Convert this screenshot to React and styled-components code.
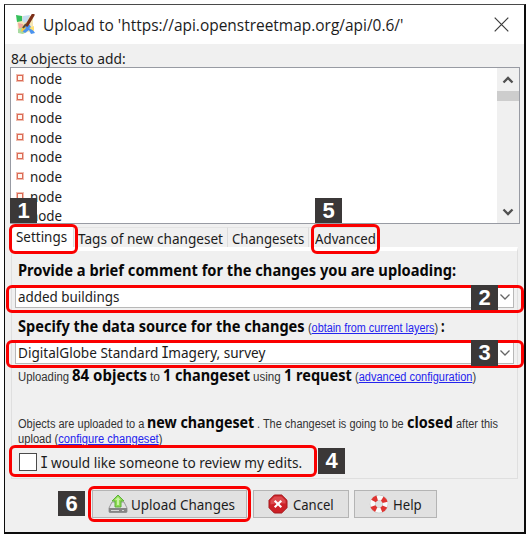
import React, { useLayoutEffect, useRef, useState } from "react";
import styled, { createGlobalStyle } from "styled-components";

const GlobalStyle = createGlobalStyle`
  * { box-sizing: border-box; }
  body { margin: 0; background: #fff; }
`;

const Page = styled.div`
  position: relative;
  width: 532px;
  height: 538px;
  padding: 4px 5px 4px 4px;
  background: #fff;
  color: #1c1c1c;
  font-family: "Noto Sans", "Open Sans", sans-serif;
  font-size: 15px;
  white-space: nowrap;
  overflow: hidden;
`;

const FitBox = styled.span`
  display: inline-block;
  flex: none;
  width: ${(p) => p.$width}px;
  white-space: pre;
`;

const FitText = styled.span`
  display: inline-block;
  transform-origin: left;
`;

/* Condenses a run of text so that it takes exactly the given width. */
function Fit({ width, children, ...rest }) {
  const ref = useRef(null);
  const [scale, setScale] = useState(1);
  useLayoutEffect(() => {
    setScale(width / ref.current.offsetWidth);
  }, [width]);
  return (
    <FitBox $width={width} {...rest}>
      <FitText ref={ref} style={{ transform: `scaleX(${scale})` }}>{children}</FitText>
    </FitBox>
  );
}

const SerifI = styled.span`
  font-family: "DejaVu Sans Mono", monospace;
  line-height: 1;
  margin: 0 -1px;
`;

const Dialog = styled.section`
  width: 522px;
  height: 530px;
  border: 2px solid #0c0c0c;
  border-top: 1px solid #4a4a4a;
  border-left-width: 1px;
  background: #f0f0f0;
  display: flex;
  flex-direction: column;
`;

const TitleBar = styled.header`
  height: 39px;
  flex: none;
  background: #fff;
  display: flex;
  align-items: center;
  padding: 0 15px 0 11px;
`;

const Title = styled.h1`
  margin: 0 auto 0 7px;
  font: 400 17px/37px "Open Sans", "Noto Sans", sans-serif;
`;

const Caption = styled.div`
  height: 23px;
  flex: none;
  padding-left: 6px;
  line-height: 28px;
`;

const ListBox = styled.div`
  width: 510px;
  height: 157px;
  flex: none;
  margin-left: 5px;
  border: 1px solid #989ba3;
  background: #fff;
  display: flex;
  justify-content: space-between;
  overflow: hidden;
`;

const Rows = styled.ul`
  margin: 0;
  padding: 0 0 0 6px;
  list-style: none;
`;

const Row = styled.li`
  height: 19.65px;
  line-height: 20px;
  display: flex;
  align-items: center;
  gap: 7px;
`;

const NodeMark = styled.span`
  width: 6px;
  height: 6px;
  border: 1px solid #dc6b57;
  outline: 0.5px solid #f0beb0;
  background: #fff6ee;
`;

const ScrollBar = styled.div`
  width: 22px;
  background: #f0f0f0;
  display: flex;
  flex-direction: column;
  align-items: center;
`;

const ScrollArrow = styled.span`
  height: 23px;
  display: flex;
  align-items: center;
`;

const Thumb = styled.span`
  width: 22px;
  height: 10px;
  margin-bottom: auto;
  background: #cdcdcd;
`;

const TabStrip = styled.nav`
  height: 23px;
  flex: none;
  margin-left: 6px;
  display: flex;
  align-items: flex-end;
`;

const Tab = styled.div`
  width: ${(p) => p.$width}px;
  height: ${(p) => (p.$active ? 22 : 20)}px;
  padding-left: ${(p) => p.$inset}px;
  line-height: ${(p) => (p.$active ? 20 : 21)}px;
  background: ${(p) => (p.$active ? "#fff" : "#f0f0f0")};
  border-right: 1px solid #dcdcdc;
  border-top: 1px solid #e4e4e4;
`;

const Pane = styled.main`
  width: 507px;
  height: 232px;
  flex: none;
  margin-left: 6px;
  border: 1px solid #dfdfdf;
  border-top: 4px solid #fff;
  padding-left: 3px;
`;

const Heading = styled.h2`
  margin: 0;
  height: ${(p) => p.$height}px;
  padding-left: 3px;
  display: flex;
  align-items: baseline;
  gap: 3px;
  font: 700 16px/${(p) => p.$line}px "Noto Sans", sans-serif;
  color: #080808;
`;

const Combo = styled.div`
  width: 499px;
  height: 23px;
  border: 1px solid #b8b8b8;
  background: #fff;
  display: flex;
  justify-content: space-between;
  align-items: center;
  padding: 0 2px;
  line-height: 21px;
`;

const Info = styled.p`
  margin: 0;
  height: ${(p) => p.$height}px;
  padding-left: 3px;
  display: flex;
  align-items: baseline;
  gap: 3px;
  line-height: ${(p) => p.$line}px;
`;

const Small = styled(Fit)`
  font-family: "Liberation Sans", Arial, sans-serif;
  font-size: 12px;
  font-weight: 400;
  color: #333;
`;

const Strong = styled(Fit)`
  font-size: 16px;
  font-weight: 700;
  color: #080808;
`;

const Link = styled.a`
  color: #2424ee;
  text-decoration: underline;
`;

const CheckRow = styled.label`
  height: 34px;
  padding: 1px 0 0 4px;
  display: flex;
  align-items: center;
  gap: 4px;
  line-height: 20px;
`;

const CheckBox = styled.span`
  width: 18px;
  height: 18px;
  border: 1px solid #4a4a4a;
  background: #fff;
`;

const Actions = styled.footer`
  display: flex;
  gap: 5px;
  padding: 11px 0 0 87px;
`;

const Button = styled.button`
  width: ${(p) => p.$width}px;
  height: 28px;
  padding: 0 0 0 ${(p) => p.$inset}px;
  margin-right: ${(p) => p.$after || 0}px;
  border: 1px solid #b4b4b4;
  background: #e1e1e1;
  color: #1c1c1c;
  font: inherit;
  display: flex;
  align-items: center;
  gap: ${(p) => p.$gap}px;
`;

const Callout = styled.div`
  position: absolute;
  left: ${(p) => p.$x}px;
  top: ${(p) => p.$y}px;
  width: ${(p) => p.$w}px;
  height: ${(p) => p.$h}px;
  border: 3px solid #fa0000;
  border-radius: 6px;
`;

const Badge = styled.div`
  position: absolute;
  left: ${(p) => p.$x}px;
  top: ${(p) => p.$y}px;
  width: 27px;
  height: ${(p) => p.$h || 25}px;
  background: #3b3838;
  color: #fff;
  font: 700 22px/25px "Liberation Sans", Arial, sans-serif;
  text-align: center;
`;

const MapIcon = () => (
  <svg width="20" height="22" viewBox="0 0 20 22">
    <path d="M1 2h16v17l-5-1-5 2-5-2z" fill="#f6e7b6" />
    <path d="M0 1l6 1v5l-5 1z" fill="#35bf5a" />
    <path d="M7 2l7-1-3 7-3 1-2-3z" fill="#c4dcf0" />
    <path d="M2 9l5 1 1 4-5 1z" fill="#f2a6a0" />
    <path d="M2 15l5-2 3 4-3 3-5-1z" fill="#a8dba2" />
    <path d="M9 12l4-2 6 9-4 1-2-4-4 3-3-2z" fill="#4b93ef" />
    <path d="M13 14l5-2v5z" fill="#ffe070" />
    <path d="M7 11l3 3-4 4-1-1z" fill="#f8c843" />
    <path d="M17 1l-6 10" stroke="#7c3019" strokeWidth="3.2" strokeLinecap="round" />
    <path d="M10 10l-3 4" stroke="#55473b" strokeWidth="2" />
  </svg>
);

const CloseIcon = () => (
  <svg width="15" height="15" viewBox="0 0 15 15">
    <path d="M.7.7l13.6 13.6M14.3.7L.7 14.3" stroke="#3c3c3c" strokeWidth="1.2" />
  </svg>
);

const Chevron = ({ up, bold }) => (
  <svg width="12" height="8" viewBox="0 0 12 8">
    <path
      d={up ? "M1.5 6.5L6 2l4.5 4.5" : "M1.5 1.5L6 6l4.5-4.5"}
      fill="none"
      stroke={bold ? "#505050" : "#666"}
      strokeWidth={bold ? 2.3 : 1.3}
    />
  </svg>
);

const UploadIcon = () => (
  <svg width="20" height="20" viewBox="0 0 20 20">
    <path d="M4 8h12l3 6v3.500q0 1-1 1H2q-1 0-1-1V14z" fill="#e2e2e2" stroke="#9a9a9a" />
    <path d="M1 14h18v3.500q0 1-1 1H2q-1 0-1-1z" fill="#858585" />
    <path d="M3 16.500h8M14 16.500h2" stroke="#d8d8d8" />
    <path d="M10 1l6 6h-3v6H7V7H4z" fill="#8ddb51" stroke="#5cae3c" />
    <path d="M10 3l2.500 3H11v5H9V6H7z" fill="#c8f3a0" />
  </svg>
);

const CancelIcon = () => (
  <svg width="20" height="20" viewBox="0 0 20 20">
    <path d="M6.300 1h7.400L19 6.300v7.400L13.700 19H6.300L1 13.700V6.300z" fill="#cc2026" stroke="#a5181d" />
    <path d="M6.500 2.500h7l4 4v3q-7-1-15 1v-4z" fill="#dc4a4e" />
    <path d="M6.700 6.700l6.600 6.600M13.300 6.700l-6.600 6.600" stroke="#fff" strokeWidth="2.100" />
  </svg>
);

const HelpIcon = () => (
  <svg width="20" height="20" viewBox="0 0 20 20">
    <circle cx="10" cy="10" r="6.300" fill="none" stroke="#b9b9b9" strokeWidth="5.800" />
    <circle cx="10" cy="10" r="6.300" fill="none" stroke="#fafafa" strokeWidth="5" />
    <circle
      cx="10"
      cy="10"
      r="6.300"
      fill="none"
      stroke="#df3431"
      strokeWidth="5.200"
      strokeDasharray="4.600 5.296"
      strokeDashoffset="-2.650"
    />
  </svg>
);

const nodes = Array.from({ length: 8 }, (_, i) => i);

export default function App() {
  return (
    <Page>
      <GlobalStyle />
      <Dialog>
        <TitleBar>
          <MapIcon />
          <Title><Fit width={360}>Upload to 'https://api.openstreetmap.org/api/0.6/'</Fit></Title>
          <CloseIcon />
        </TitleBar>
        <Caption><Fit width={115}>84 objects to add:</Fit></Caption>
        <ListBox>
          <Rows>
            {nodes.map((n) => (
              <Row key={n}>
                <NodeMark />
                <Fit width={32}>node</Fit>
              </Row>
            ))}
          </Rows>
          <ScrollBar>
            <ScrollArrow><Chevron up bold /></ScrollArrow>
            <Thumb />
            <ScrollArrow><Chevron bold /></ScrollArrow>
          </ScrollBar>
        </ListBox>
        <TabStrip>
          <Tab $active $width={63} $inset={5}><Fit width={51}>Settings</Fit></Tab>
          <Tab $width={154} $inset={4}><Fit width={145}>Tags of new changeset</Fit></Tab>
          <Tab $width={81} $inset={4}><Fit width={72}>Changesets</Fit></Tab>
          <Tab $width={70} $inset={6}><Fit width={61}>Advanced</Fit></Tab>
        </TabStrip>
        <Pane>
          <Heading $height={34} $line={38}>
            <Fit width={438}>Provide a brief comment for the changes you are uploading:</Fit>
          </Heading>
          <Combo><Fit width={101}>added buildings</Fit><Chevron /></Combo>
          <Heading $height={33} $line={36}>
            <Fit width={287}>Specify the data source for the changes</Fit>
            <Small width={130}>(<Link>obtain from current layers</Link>)</Small>
            <Fit width={4}>:</Fit>
          </Heading>
          <Combo>
            <Fit width={247}>DigitalGlobe Standard <SerifI>I</SerifI>magery, survey</Fit>
            <Chevron />
          </Combo>
          <Info $height={24} $line={23}>
            <Small width={51}>Uploading</Small>
            <Strong width={75}>84 objects</Strong>
            <Small width={10}>to</Small>
            <Strong width={87}>1 changeset</Strong>
            <Small width={28}>using</Small>
            <Strong width={68}>1 request</Strong>
            <Small width={121}>(<Link>advanced configuration</Link>)</Small>
          </Info>
          <Info $height={23} $line={23} />
          <Info $height={23} $line={23}>
            <Small width={126}>Objects are uploaded to a</Small>
            <Strong width={107}>new changeset</Strong>
            <Small width={147}>. The changeset is going to be</Small>
            <Strong width={46}>closed</Strong>
            <Small width={42}>after this</Small>
          </Info>
          <Info $height={10} $line={10}>
            <Small width={144}>upload (<Link>configure changeset</Link>)</Small>
          </Info>
          <CheckRow>
            <CheckBox />
            <Fit width={261}><SerifI>I</SerifI> would like someone to review my edits.</Fit>
          </CheckRow>
        </Pane>
        <Actions>
          <Button $width={155} $inset={15} $gap={3} $after={1}>
            <UploadIcon /><Fit width={104}>Upload Changes</Fit>
          </Button>
          <Button $width={96} $inset={14} $gap={5}><CancelIcon /><Fit width={41}>Cancel</Fit></Button>
          <Button $width={83} $inset={14} $gap={4}><HelpIcon /><Fit width={29}>Help</Fit></Button>
        </Actions>
      </Dialog>
      <Callout $x={9} $y={224} $w={69} $h={30} />
      <Callout $x={311} $y={224} $w={69} $h={30} />
      <Callout $x={6} $y={285} $w={518} $h={28} />
      <Callout $x={6} $y={340} $w={518} $h={28} />
      <Callout $x={9} $y={445} $w={308} $h={32} />
      <Callout $x={88} $y={486} $w={163} $h={36} />
      <Badge $x={10} $y={198}>1</Badge>
      <Badge $x={315} $y={198}>5</Badge>
      <Badge $x={471} $y={285}>2</Badge>
      <Badge $x={471} $y={340} $h={26}>3</Badge>
      <Badge $x={318} $y={448} $h={26}>4</Badge>
      <Badge $x={58} $y={491}>6</Badge>
    </Page>
  );
}
